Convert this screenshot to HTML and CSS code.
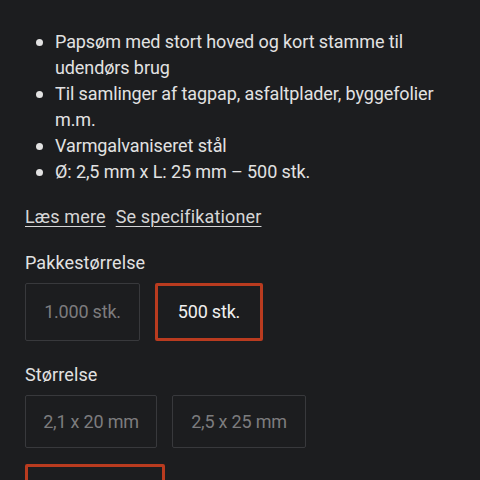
FILE: index.html
```html
<!DOCTYPE html>
<html lang="da">
<head>
<meta charset="utf-8">
<link rel="stylesheet" href="styles.css">
</head>
<body>
<div class="page">
  <ul class="features">
    <li>Papsøm med stort hoved og kort stamme til udendørs brug</li>
    <li>Til samlinger af tagpap, asfaltplader, byggefolier m.m.</li>
    <li>Varmgalvaniseret stål</li>
    <li>Ø: 2,5 mm x L: 25 mm – 500 stk.</li>
  </ul>
  <div class="links">
    <a href="#">Læs mere</a>
    <a href="#">Se specifikationer</a>
  </div>
  <div class="option">
    <div class="label">Pakkestørrelse</div>
    <div class="choices">
      <div class="choice pack">1.000 stk.</div>
      <div class="choice pack selected">500 stk.</div>
    </div>
  </div>
  <div class="option">
    <div class="label">Størrelse</div>
    <div class="choices">
      <div class="choice size">2,1 x 20 mm</div>
      <div class="choice size">2,5 x 25 mm</div>
      <div class="choice size selected wide">2,5 x 30 mm</div>
    </div>
  </div>
</div>
</body>
</html>
```
FILE: styles.css
```css
html, body {
  margin: 0;
  background: #1c1d1f;
}
body {
  font-family: Roboto, "Liberation Sans", sans-serif;
  color: #e2e2e2;
  font-size: 18px;
  line-height: 26px;
}
.page {
  padding: 29px 25px 0 25px;
}
.features {
  margin: 0;
  padding: 0 0 0 30px;
  list-style: none;
}
.features li {
  position: relative;
  letter-spacing: -0.1px;
}
.features li::before {
  content: "";
  position: absolute;
  left: -19px;
  top: 10px;
  width: 7px;
  height: 7px;
  border-radius: 50%;
  background: #e2e2e2;
}
.links {
  margin-top: 19px;
  display: flex;
  gap: 10px;
}
.links a {
  color: #d6d6d6;
  text-decoration: underline;
  text-underline-offset: 3px;
  text-decoration-thickness: 1px;
  letter-spacing: 0.15px;
}
.option {
  margin-top: 20px;
}
.option + .option {
  margin-top: 21px;
}
.label {
  color: #e2e2e2;
  letter-spacing: 0.1px;
}
.choices {
  margin-top: 7px;
  display: flex;
  flex-wrap: wrap;
  gap: 16px 15px;
}
.choice {
  box-sizing: border-box;
  display: flex;
  align-items: center;
  justify-content: center;
  border: 1.5px solid #38393c;
  border-radius: 2px;
  color: #7c7c7e;
  letter-spacing: -0.2px;
}
.pack {
  height: 58px;
  width: 115px;
}
.pack.selected {
  width: 108px;
}
.size {
  height: 53px;
  width: 132px;
}
.size + .size {
  width: 134px;
}
.size.wide {
  width: 140px;
}
.choice.selected {
  border: 3px solid #b93b1f;
  color: #f0f0f0;
}
```
